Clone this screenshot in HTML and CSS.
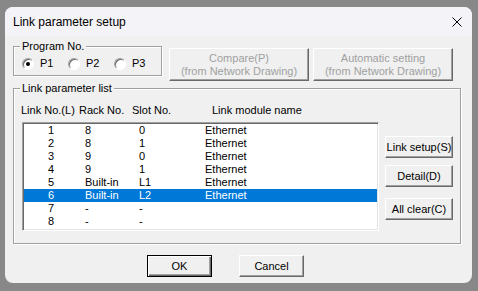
FILE: index.html
```html
<!DOCTYPE html>
<html>
    <head>
        <link rel="stylesheet" href="styles.css">
    </head>

    <body>
        <div class="dialog">
            <div class="titlebar">
                <span class="title">Link parameter setup</span>
                <svg class="close" width="10" height="10" viewBox="0 0 10 10">
                    <path d="M0.5 0.5 L9.5 9.5 M9.5 0.5 L0.5 9.5" stroke="#000" stroke-width="1" fill="none"/>
                </svg>
            </div>

            <div class="content">
                <div class="top-row">
                    <div class="group program-group">
                        <div class="group-label">Program No.</div>
                        <div class="radios">
                            <label class="radio"><span class="radio-box checked"></span>P1</label>
                            <label class="radio"><span class="radio-box"></span>P2</label>
                            <label class="radio"><span class="radio-box"></span>P3</label>
                        </div>
                    </div>
                    <button class="btn btn-wide btn-first" disabled>Compare(P)<br>(from Network Drawing)</button>
                    <button class="btn btn-wide" disabled>Automatic setting<br>(from Network Drawing)</button>
                </div>

                <div class="group list-group">
                    <div class="group-label">Link parameter list</div>
                    <div class="list-header">
                        <span class="h-no">Link No.(L)</span>
                        <span class="h-rack">Rack No.</span>
                        <span class="h-slot">Slot No.</span>
                        <span class="h-name">Link module name</span>
                    </div>
                    <div class="list-area">
                        <div class="listbox">
                            <div class="row"><span class="c-no">1</span><span class="c-rack">8</span><span class="c-slot">0</span><span class="c-name">Ethernet</span></div>
                            <div class="row"><span class="c-no">2</span><span class="c-rack">8</span><span class="c-slot">1</span><span class="c-name">Ethernet</span></div>
                            <div class="row"><span class="c-no">3</span><span class="c-rack">9</span><span class="c-slot">0</span><span class="c-name">Ethernet</span></div>
                            <div class="row"><span class="c-no">4</span><span class="c-rack">9</span><span class="c-slot">1</span><span class="c-name">Ethernet</span></div>
                            <div class="row"><span class="c-no">5</span><span class="c-rack">Built-in</span><span class="c-slot">L1</span><span class="c-name">Ethernet</span></div>
                            <div class="row selected"><span class="c-no">6</span><span class="c-rack">Built-in</span><span class="c-slot">L2</span><span class="c-name">Ethernet</span></div>
                            <div class="row"><span class="c-no">7</span><span class="c-rack">-</span><span class="c-slot">-</span><span class="c-name"></span></div>
                            <div class="row"><span class="c-no">8</span><span class="c-rack">-</span><span class="c-slot">-</span><span class="c-name"></span></div>
                        </div>
                        <div class="side-buttons">
                            <button class="btn btn-side btn-setup">Link setup(S)</button>
                            <button class="btn btn-side btn-detail">Detail(D)</button>
                            <button class="btn btn-side btn-clear">All clear(C)</button>
                        </div>
                    </div>
                </div>

                <div class="footer">
                    <button class="btn btn-footer btn-default">OK</button>
                    <button class="btn btn-footer">Cancel</button>
                </div>
            </div>
        </div>
    </body>
</html>
```

FILE: styles.css
```css
html {
    height: 100%;
}

body {
    margin: 0;
    height: 291px;
    overflow: hidden;
    background: #888888;
    font-family: "Liberation Sans", Arial, sans-serif;
    font-size: 11px;
    color: #000;
}

.dialog {
    margin: 7px 0 0 5px;
    width: 467px;
    height: 276px;
    border-radius: 8px;
    overflow: hidden;
    background: #f0f0f0;
}

.titlebar {
    height: 29px;
    padding: 0 10px 0 8px;
    display: flex;
    align-items: center;
    justify-content: space-between;
    background: #f3f3f8;
}

.title {
    font-size: 12px;
}

.content {
    padding-left: 8px;
}

.top-row {
    display: flex;
    align-items: flex-start;
    margin-top: 10px;
}

/* etched group box */
.group {
    box-sizing: border-box;
    border: 1px solid #a0a0a0;
    box-shadow: inset 1px 1px #fff, 1px 1px #fff;
}

.group-label {
    width: fit-content;
    margin: -7px 0 0 6px;
    padding: 0 2px;
    line-height: 13px;
    background: #f0f0f0;
}

.program-group {
    width: 149px;
    height: 30px;
}

.radios {
    display: flex;
    margin-top: 4px;
    padding-left: 8px;
}

.radio {
    width: 46px;
    height: 13px;
    display: flex;
    align-items: center;
    line-height: 13px;
}

.radio-box {
    box-sizing: border-box;
    width: 12px;
    height: 12px;
    margin-right: 6px;
    border-radius: 50%;
    border: 1px solid;
    border-color: #a0a0a0 #fff #fff #a0a0a0;
    box-shadow: inset 1px 1px #696969;
    background: #fff;
    display: flex;
    align-items: center;
    justify-content: center;
}

.radio-box.checked::after {
    content: "";
    width: 4px;
    height: 4px;
    border-radius: 50%;
    background: #000;
}

.btn {
    box-sizing: border-box;
    padding: 0;
    margin: 0;
    font-family: inherit;
    font-size: 11px;
    line-height: 13px;
    color: #000;
    background: #f0f0f0;
    border: 1px solid;
    border-color: #fff #696969 #696969 #fff;
    border-radius: 0;
    box-shadow: inset -1px -1px #a0a0a0;
}

.btn:disabled {
    color: #a0a0a0;
}

.btn-wide {
    width: 140px;
    height: 33px;
    margin-top: 2px;
    margin-left: 4px;
}

.btn-first {
    margin-left: 7px;
}

.list-group {
    width: 448px;
    height: 156px;
    margin-top: 7px;
}

.list-header {
    display: flex;
    margin-top: 9px;
    padding-left: 7px;
    line-height: 13px;
}

.h-no {
    width: 58px;
}

.h-rack {
    width: 53px;
}

.h-slot {
    width: 80px;
}

.list-area {
    display: flex;
    margin-top: 5px;
    padding-left: 8px;
}

.listbox {
    box-sizing: border-box;
    width: 357px;
    height: 109px;
    padding: 1px;
    background: #fff;
    border: 1px solid;
    border-color: #a0a0a0 #fff #fff #a0a0a0;
    box-shadow: inset 1px 1px #696969, inset -1px -1px #e3e3e3;
}

.row {
    display: flex;
    height: 13px;
    line-height: 13px;
}

.row.selected {
    background: #0078d7;
    color: #fff;
}

.c-no {
    width: 54px;
    text-align: center;
}

.c-rack {
    box-sizing: border-box;
    width: 54px;
    padding-left: 7px;
}

.c-slot {
    box-sizing: border-box;
    width: 66px;
    padding-left: 7px;
}

.c-name {
    padding-left: 7px;
}

.side-buttons {
    display: flex;
    flex-direction: column;
    margin-left: 6px;
}

.btn-side {
    width: 68px;
    height: 22px;
}

.btn-setup {
    margin-top: 14px;
}

.btn-detail {
    margin-top: 7px;
}

.btn-clear {
    margin-top: 11px;
}

.footer {
    display: flex;
    gap: 27px;
    margin-top: 11px;
    padding-left: 134px;
}

.btn-footer {
    width: 65px;
    height: 22px;
}

.btn-default {
    border-color: #000;
    box-shadow: inset 1px 1px #fff, inset -1px -1px #696969, inset -2px -2px #a0a0a0;
}
```
